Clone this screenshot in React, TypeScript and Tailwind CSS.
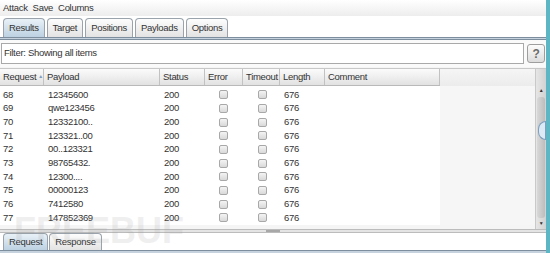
const rows = [
  { req: "68", payload: "12345600" },
  { req: "69", payload: "qwe123456" },
  { req: "70", payload: "12332100.." },
  { req: "71", payload: "123321..00" },
  { req: "72", payload: "00..123321" },
  { req: "73", payload: "98765432." },
  { req: "74", payload: "12300...." },
  { req: "75", payload: "00000123" },
  { req: "76", payload: "7412580" },
  { req: "77", payload: "147852369" },
];

const cols = [
  { name: "Request", w: "w-[44px]" },
  { name: "Payload", w: "w-[116px]" },
  { name: "Status", w: "w-[45px]" },
  { name: "Error", w: "w-[38px]" },
  { name: "Timeout", w: "w-[37px]" },
  { name: "Length", w: "w-[45px]" },
  { name: "Comment", w: "w-[115px]" },
];

function Tab({ label, active }: { label: string; active?: boolean }) {
  return (
    <div
      className={`h-full px-[5px] flex items-center rounded-t-[4px] border border-b-0 border-[#9aa3ab] ${
        active ? "bg-gradient-to-b from-[#e9f1f7] to-[#bcd1e2]" : "bg-gradient-to-b from-[#fdfdfd] to-[#e3e3e3]"
      }`}
    >
      {label}
    </div>
  );
}

function Check() {
  return <div className="w-[9px] h-[9px] rounded-[2px] border border-[#a8a8a8] bg-gradient-to-b from-[#f4f4f4] to-[#d9d9d9]" />;
}

export default function App() {
  return (
    <div
      className="relative w-[550px] h-[253px] overflow-hidden bg-[#f5f5f5] text-[#333] text-[9.5px] tracking-[-0.3px] flex border-r-[4px] border-[#5db6c3]"
      style={{ fontFamily: '"Liberation Sans", Arial, sans-serif' }}
    >
      <div className="flex-1 flex flex-col min-w-0">
        {/* menu */}
        <div className="h-[16px] flex items-center gap-[5px] px-[3px] bg-gradient-to-b from-[#ffffff] to-[#ededed]">
          <span>Attack</span>
          <span>Save</span>
          <span>Columns</span>
        </div>

        {/* tabs */}
        <div className="h-[21px] pt-[2px] flex items-end gap-[2px] pl-[3px] bg-white">
          <Tab label="Results" active />
          <Tab label="Target" />
          <Tab label="Positions" />
          <Tab label="Payloads" />
          <Tab label="Options" />
        </div>
        <div className="h-[3px] border-t border-b border-[#7d8f9f] bg-[#c6d3de]" />

        {/* filter */}
        <div className="h-[27px] flex items-center gap-[3px] pl-[1px] pr-[1px] bg-[#fafafa]">
          <div className="flex-1 h-[21px] border border-[#a9a9a9] bg-white flex items-center px-[2px]">
            Filter: Showing all items
          </div>
          <div className="w-[18px] h-[19px] rounded-[3px] border border-[#9e9e9e] bg-gradient-to-b from-[#fcfcfc] to-[#dcdcdc] flex items-center justify-center text-[12px] font-bold text-[#6b6b6b]">
            ?
          </div>
        </div>

        {/* table */}
        <div className="mt-[1px] flex-1 flex min-h-0 border-t border-[#c8c8c8]">
          <div className="flex-1 flex flex-col">
            <div className="flex">
              <div className="flex flex-col bg-white">
                <div className="flex h-[17px] bg-gradient-to-b from-[#fbfbfb] to-[#e2e2e2] border-b border-[#b9b9b9]">
                  {cols.map((c) => (
                    <div key={c.name} className={`${c.w} border-r border-[#c2c2c2] flex items-center px-[3px] gap-[2px]`}>
                      {c.name}
                      {c.name === "Request" && <span className="text-[5px] text-[#7a9cc0]">▲</span>}
                    </div>
                  ))}
                </div>
                <div className="pt-[2px]">
                  {rows.map((r) => (
                    <div key={r.req} className="flex h-[13.67px] items-center">
                      <div className="w-[44px] px-[3px]">{r.req}</div>
                      <div className="w-[116px] px-[4px]">{r.payload}</div>
                      <div className="w-[45px] px-[4px]">200</div>
                      <div className="w-[38px] flex justify-center pr-[1px]"><Check /></div>
                      <div className="w-[37px] flex justify-center pl-[1px]"><Check /></div>
                      <div className="w-[45px] px-[4px]">676</div>
                      <div className="w-[115px]" />
                    </div>
                  ))}
                </div>
              </div>
              <div className="flex-1 bg-[#f6f6f6]">
                <div className="h-[17px] bg-gradient-to-b from-[#f5f5f5] to-[#ececec]" />
              </div>
            </div>
          </div>
          {/* scrollbar */}
          <div className="w-[11px] flex flex-col border-l border-[#c9c9c9] bg-gradient-to-r from-[#e6e6e6] to-[#d2d2d2]">
            <div className="h-[17px]" />
            <div className="h-[10px] flex items-center justify-center text-[5px] text-[#333]">▲</div>
            <div className="flex-1 mx-[1px] my-[1px] rounded-[3px] bg-gradient-to-r from-[#d8d8d8] to-[#bdbdbd] relative">
              <div className="absolute right-[-1px] top-[24px] w-[8px] h-[19px] rounded-l-full border border-[#7f9fbf] bg-[#dceaf6]" />
            </div>
            <div className="h-[10px] flex items-center justify-center text-[5px] text-[#333]">▼</div>
          </div>
        </div>

        {/* splitter */}
        <div className="h-[4px] border-t border-b border-[#bcbcbc] bg-[#e4e4e4] flex justify-center items-center">
          <div className="w-[14px] h-[2px] bg-[#a8a8a8]" />
        </div>

        {/* bottom tabs */}
        <div className="h-[17px] flex items-end gap-[1px] pl-[3px] bg-white">
          <Tab label="Request" active />
          <Tab label="Response" />
        </div>
        <div className="h-[3px] border-t border-[#7d8f9f] bg-[#c6d3de]" />
      </div>

      <div className="absolute left-[14px] top-[213px] text-[36px] leading-none font-bold tracking-[0px] text-[#999] opacity-15 pointer-events-none">
        FREEBUF
      </div>
    </div>
  );
}
